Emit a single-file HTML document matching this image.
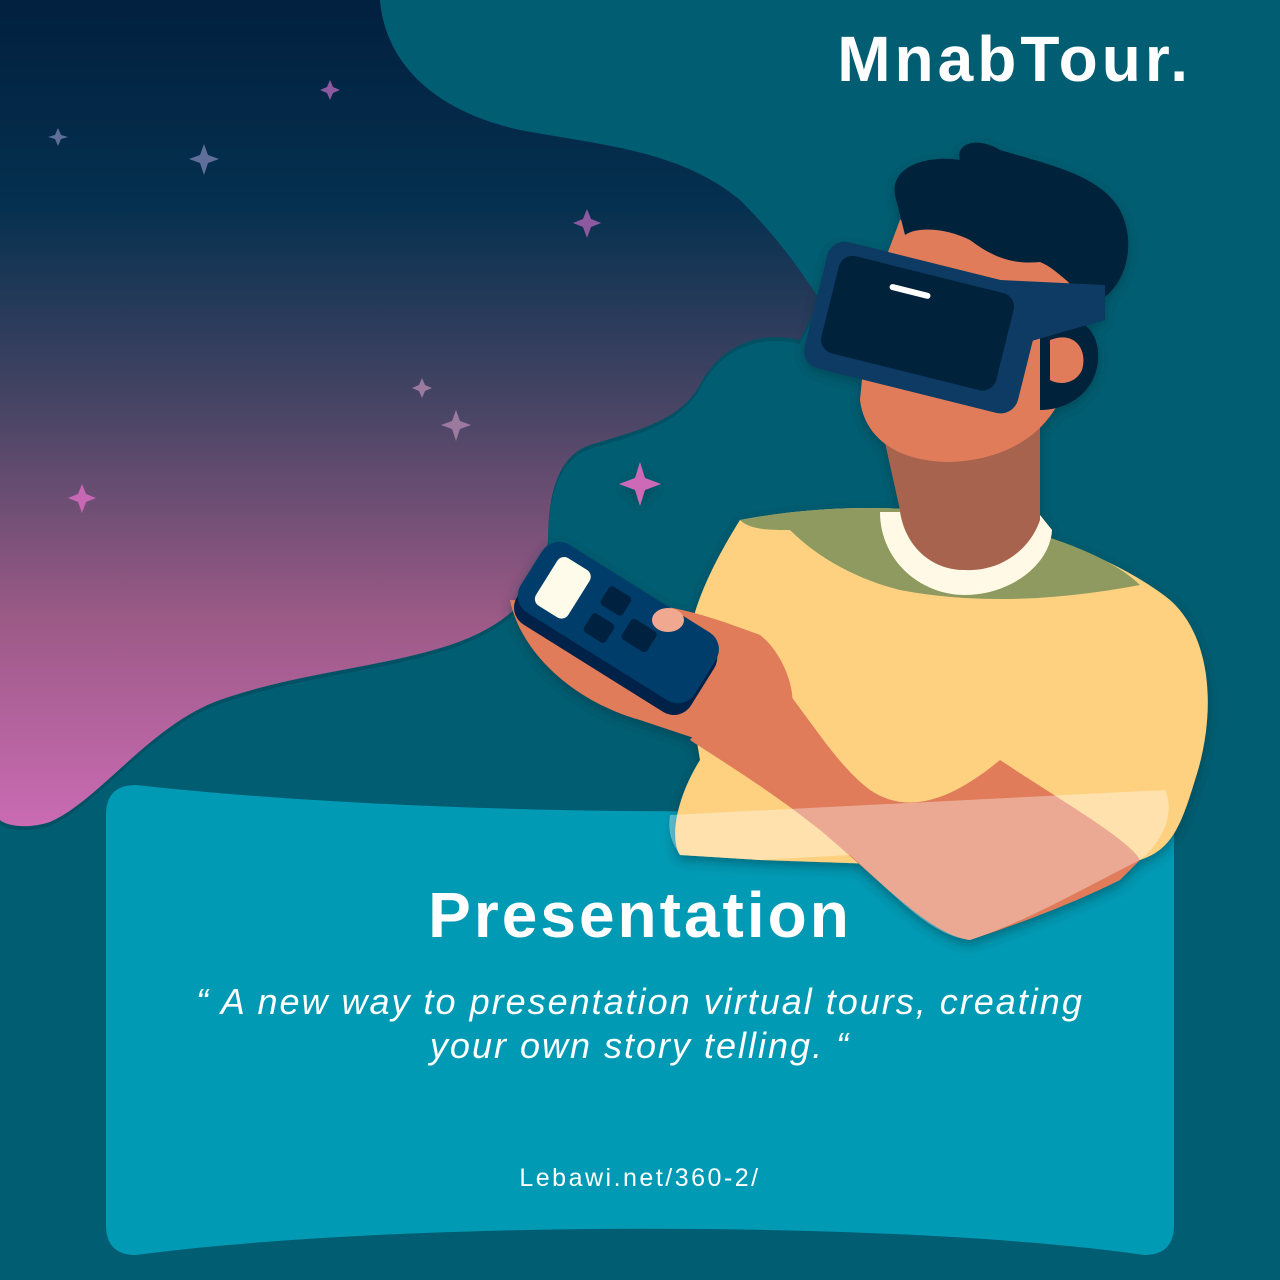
<!DOCTYPE html>
<html><head><meta charset="utf-8"><style>
html,body{margin:0;padding:0;width:1280px;height:1280px;overflow:hidden;background:#015e72;font-family:"Liberation Sans",sans-serif}
svg{position:absolute;left:0;top:0}
.t{position:absolute;color:#fff;text-align:center}
</style></head><body>
<svg width="1280" height="1280" viewBox="0 0 1280 1280">
<defs>
<linearGradient id="g" x1="0" y1="0" x2="0" y2="1">
<stop offset="0" stop-color="#02203f"/>
<stop offset="0.25" stop-color="#05304f"/>
<stop offset="0.5" stop-color="#4a4565"/>
<stop offset="0.75" stop-color="#9c5a87"/>
<stop offset="1" stop-color="#ca6bb3"/>
</linearGradient>
<filter id="sh" x="-10%" y="-10%" width="120%" height="120%"><feDropShadow dx="0" dy="4" stdDeviation="6" flood-color="#00303d" flood-opacity="0.5"/></filter>
</defs>
<path transform="translate(0,4)" d="M0 0 L380 0 C385 60 430 110 520 130 C600 145 680 150 740 200 C780 240 800 270 820 300 L800 340 C760 330 720 345 700 385 C680 420 640 430 590 445 C560 455 548 490 548 540 C545 590 510 625 450 645 C380 668 300 672 220 700 C150 725 100 800 50 822 C25 830 5 825 0 820 Z" fill="#014a5c" opacity="0.6"/>
<path d="M0 0 L380 0 C385 60 430 110 520 130 C600 145 680 150 740 200 C780 240 800 270 820 300 L800 340 C760 330 720 345 700 385 C680 420 640 430 590 445 C560 455 548 490 548 540 C545 590 510 625 450 645 C380 668 300 672 220 700 C150 725 100 800 50 822 C25 830 5 825 0 820 Z" fill="url(#g)"/>
<g fill="#5f6f9a"><path d="M58 128 L61 135 L68 137 L61 139 L58 146 L55 139 L48 137 L55 135Z"/><path d="M204 144 L208 155 L219 159 L208 163 L204 175 L200 163 L189 159 L200 155Z"/></g>
<g fill="#8d5aa0"><path d="M330 80 L333 87 L340 90 L333 93 L330 100 L327 93 L320 90 L327 87Z"/><path d="M587 209 L591 219 L601 223 L591 227 L587 238 L583 227 L573 223 L583 219Z"/></g>
<g fill="#9c7aa0"><path d="M422 378 L425 385 L432 388 L425 391 L422 398 L419 391 L412 388 L419 385Z"/><path d="M456 410 L460 421 L471 425 L460 429 L456 441 L452 429 L441 425 L452 421Z"/></g>
<path d="M82 484 L86 494 L96 498 L86 502 L82 513 L78 502 L68 498 L78 494Z" fill="#c868b4"/>
<path d="M640 462 L645 478 L661 484 L645 490 L640 506 L635 490 L619 484 L635 478Z" fill="#cc6ab8" filter="url(#sh)"/>
<path d="M136 785 C400 815 900 825 1144 785 Q1174 785 1174 815 L1174 1225 Q1174 1255 1144 1255 C900 1220 400 1220 136 1255 Q106 1255 106 1225 L106 815 Q106 785 136 785Z" fill="#019ab4"/>
<g filter="url(#sh)">
<path d="M740 520 C820 505 900 505 960 515 C1040 530 1120 560 1170 600 C1215 640 1215 720 1195 780 C1180 830 1170 850 1140 860 L1050 870 L760 860 L680 855 C670 840 675 800 700 760 L690 700 C680 650 690 600 740 520Z" fill="#fdd180"/>
<path d="M740 520 C820 505 900 505 960 515 C1040 530 1110 555 1140 585 C1060 600 980 605 900 590 C860 580 820 560 790 530 C770 530 750 530 740 520Z" fill="#8e9a60"/>
<path d="M880 512 C880 560 920 595 965 595 C1010 595 1050 565 1052 530 L1040 515 C1030 545 1000 570 965 570 C930 570 905 545 900 512Z" fill="#fff9e6"/>
<path d="M880 420 L1040 410 L1040 520 C1030 550 1000 572 965 570 C930 570 905 545 900 510 Z" fill="#a8644f"/>
<path d="M760 660 C800 700 830 760 870 790 C900 810 940 810 1000 760 C1060 800 1130 840 1140 860 L1120 880 C1080 900 1030 920 970 940 C930 935 880 880 820 830 C770 790 720 760 690 740 Z" fill="#e07b5a"/>
<path d="M510 600 C520 650 570 700 640 720 L700 740 L790 720 C800 690 780 650 760 635 C720 620 690 610 660 606 Z" fill="#e07b5a"/>
<g transform="rotate(32 612 628)">
<rect x="515" y="588" width="205" height="84" rx="20" fill="#022448"/>
<rect x="512" y="580" width="205" height="80" rx="20" fill="#053e6a"/>
<rect x="530" y="592" width="38" height="56" rx="8" fill="#fffbea"/>
<rect x="588" y="592" width="26" height="22" rx="4" fill="#022040"/>
<rect x="588" y="624" width="26" height="22" rx="4" fill="#022040"/>
<rect x="624" y="608" width="30" height="24" rx="4" fill="#022040"/>
</g>
<ellipse cx="668" cy="620" rx="16" ry="12" fill="#f0a890"/>
<path d="M900 220 C950 210 1030 215 1060 260 C1080 300 1080 360 1060 400 C1040 440 1000 460 950 462 C900 462 865 440 860 400 L870 300 Z" fill="#e07b5a"/>
<path d="M1040 320 C1080 310 1100 330 1098 360 C1096 390 1070 410 1040 410 Z" fill="#02203a"/>
<path d="M1050 340 C1075 330 1088 350 1082 370 C1075 385 1058 385 1050 380Z" fill="#e07b5a"/>
<path d="M895 195 C890 165 930 155 960 160 C955 145 975 135 1000 150 C1050 165 1100 175 1120 210 C1140 250 1120 290 1100 300 C1070 290 1060 270 1040 262 C1010 265 990 255 970 240 C950 230 920 225 905 235 Z" fill="#02203a"/>
<path d="M1000 280 L1105 285 L1105 320 L1000 350 Z" fill="#0a3a64"/>
<g transform="rotate(14 920 330)">
<rect x="812" y="262" width="220" height="130" rx="18" fill="#0a3a64"/>
<rect x="826" y="274" width="180" height="100" rx="14" fill="#02203a"/>
<rect x="880" y="292" width="42" height="6" rx="3" fill="#fff"/>
</g>
</g>
<path d="M670 815 L1165 790 C1175 810 1165 840 1140 860 C1080 890 1030 920 970 940 C930 935 900 900 850 855 L760 860 L680 855 C670 840 668 830 670 815Z" fill="#fff" opacity="0.35"/>
</svg>
<div class="t" style="right:88px;top:22px;font-size:64px;font-weight:bold;text-align:right;letter-spacing:4px">MnabTour.</div>
<div class="t" style="left:0;width:1280px;top:878px;font-size:64px;font-weight:bold;letter-spacing:3px">Presentation</div>
<div class="t" style="left:100px;width:1080px;top:980px;font-size:36px;font-style:italic;line-height:44px;letter-spacing:2px">“ A new way to presentation virtual tours, creating<br>your own story telling. “</div>
<div class="t" style="left:0;width:1280px;top:1164px;font-size:25px;letter-spacing:2.5px">Lebawi.net/360-2/</div>
</body></html>
